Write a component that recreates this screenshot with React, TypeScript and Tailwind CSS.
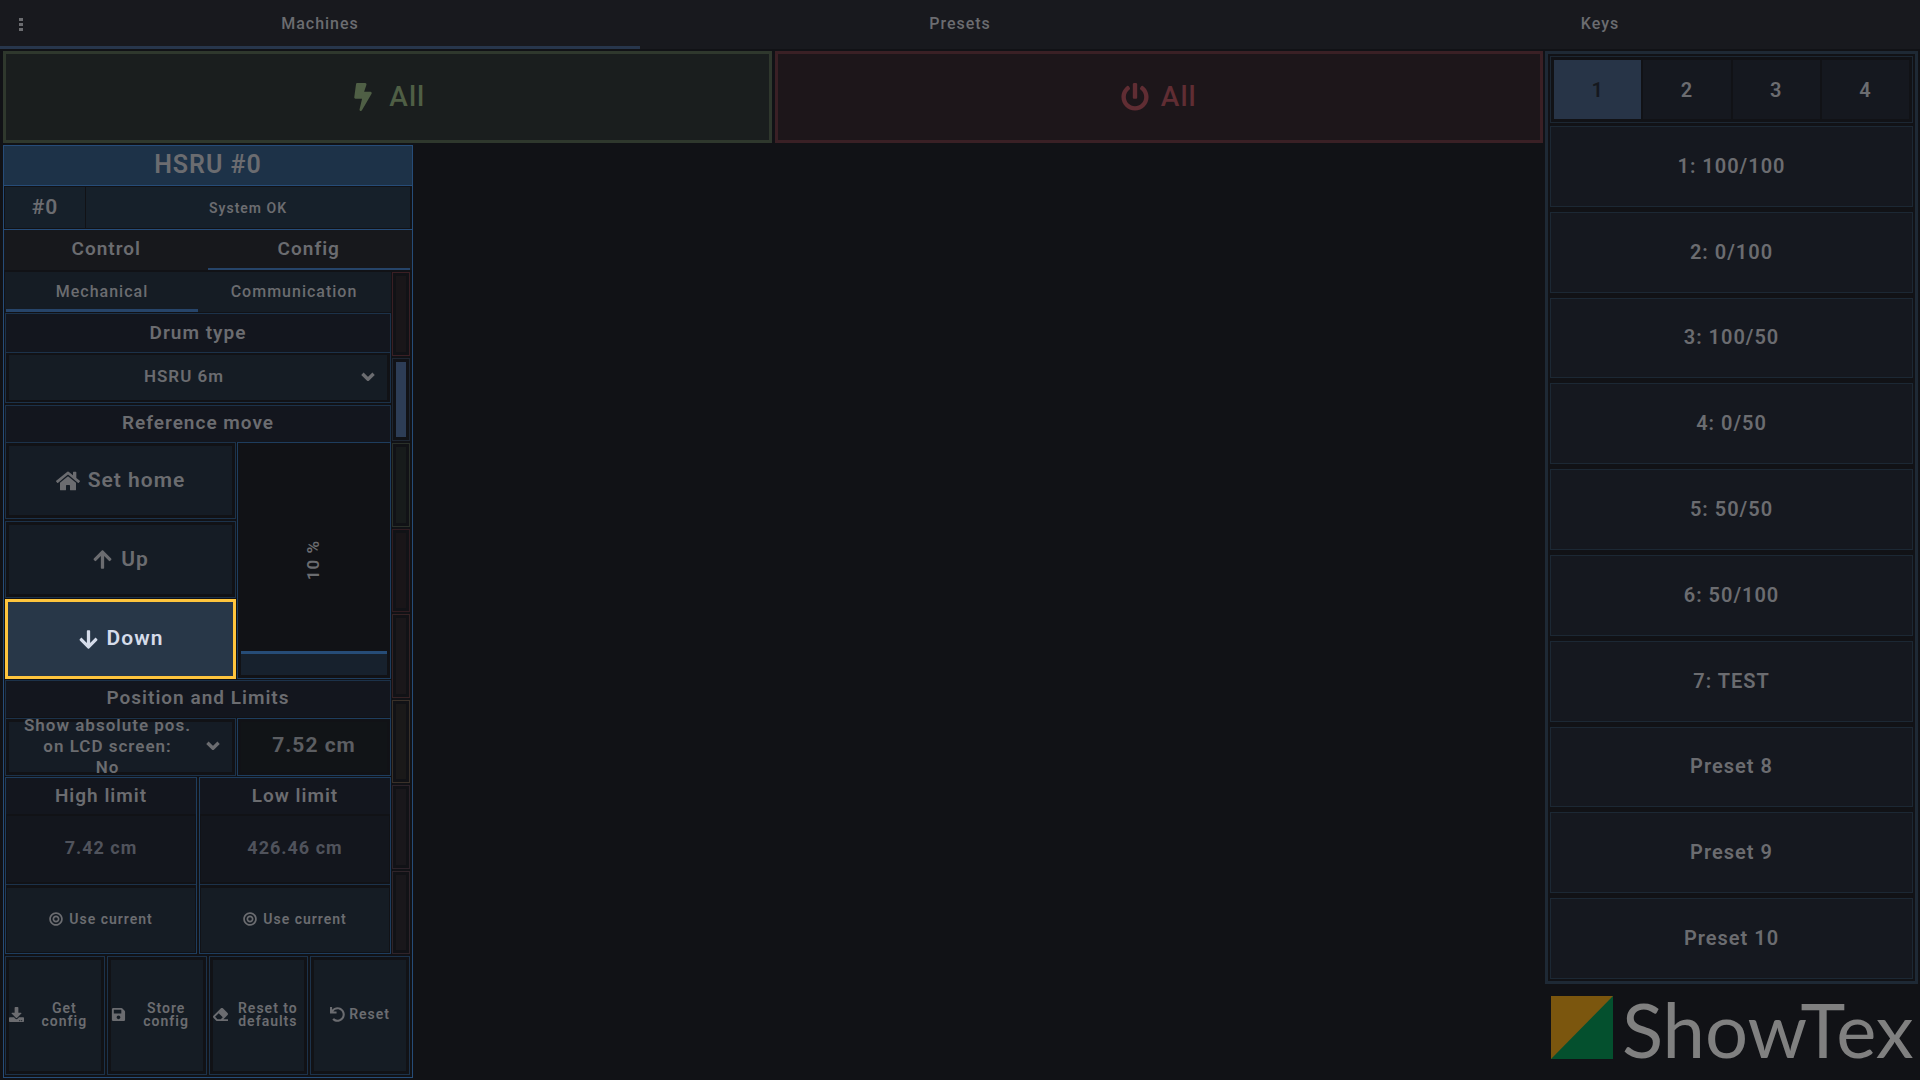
import { useState } from "react";
import {
  FaArrowDown,
  FaArrowUp,
  FaBolt,
  FaBullseye,
  FaDownload,
  FaEraser,
  FaHome,
  FaPowerOff,
  FaSave,
  FaUndo,
} from "react-icons/fa";

const TABS = ["Machines", "Presets", "Keys"];

const KEYS = [
  "1: 100/100",
  "2: 0/100",
  "3: 100/50",
  "4: 0/50",
  "5: 50/50",
  "6: 50/100",
  "7: TEST",
  "Preset 8",
  "Preset 9",
  "Preset 10",
];

const STRIP = [
  { name: "Disable", border: "border-[#3a1f24]", fill: "bg-[#191619]" },
  { name: "Config", border: "border-[#1e2632]", fill: "bg-[#2d3d56]" },
  { name: "Enable", border: "border-[#2a3029]", fill: "bg-[#171b1b]" },
  { name: "Stop", border: "border-[#301c21]", fill: "bg-[#191518]" },
  { name: "Errors", border: "border-[#352224]", fill: "bg-[#1a171a]" },
  { name: "Warnings", border: "border-[#3a3129]", fill: "bg-[#1a1919]" },
  { name: "Log", border: "border-[#2c2229]", fill: "bg-[#19171b]" },
  { name: "Service", border: "border-[#2f242a]", fill: "bg-[#19171b]" },
];

const ACTIONS = [
  { label: "Get config", Icon: FaDownload },
  { label: "Store config", Icon: FaSave },
  { label: "Reset to defaults", Icon: FaEraser },
  { label: "Reset", Icon: FaUndo },
];

function Chevron({ className }: { className?: string }) {
  return (
    <svg width="14" height="10" viewBox="0 0 14 10" fill="none" stroke="currentColor" strokeWidth="3.4" className={className}>
      <path d="M1.4 1.8 7 7.2l5.6-5.4" strokeLinejoin="round" />
    </svg>
  );
}

function Header() {
  return (
    <header className="relative bg-[#18191e]">
      <nav className="grid grid-cols-3">
        {TABS.map((t, i) => (
          <button
            key={t}
            className={`h-[49px] pt-[2px] border-b-3 text-base font-medium ${i === 0 ? "border-[#27364c]" : "border-transparent"}`}
          >
            {t}
          </button>
        ))}
      </nav>
      <button aria-label="Menu" className="absolute inset-y-0 left-0 w-[42px] flex items-center justify-center">
        <svg width="4" height="14" viewBox="0 0 4 14" fill="currentColor">
          <rect y="0" width="4" height="3" />
          <rect y="5" width="4" height="3" />
          <rect y="10" width="4" height="3" />
        </svg>
      </button>
    </header>
  );
}

function SectionTitle({ children }: { children: string }) {
  return <h3 className="h-9 flex items-center justify-center bg-[#13161e] pb-[2px] text-[19px]">{children}</h3>;
}

function MoveButton({ label, Icon, size }: { label: string; Icon: typeof FaHome; size: string }) {
  return (
    <div className="h-[77px] border border-[#1c324a] p-[3px]">
      <button className="w-full h-full flex items-center justify-center gap-2 bg-[#151c25] text-[21px]">
        <Icon className={size} /> {label}
      </button>
    </div>
  );
}

function Limit({ id, label, value }: { id: string; label: string; value: string }) {
  return (
    <div className="flex-1 min-w-0 border border-[#1e3d5e]">
      <label htmlFor={id} className="h-9 flex items-center justify-center bg-[#13161e] text-[19px]">
        {label}
      </label>
      <div className="h-[71px] border-b border-[#1c324a] px-px py-[2px]">
        <input
          id={id}
          defaultValue={value}
          className="w-full h-full bg-[#13161d] pb-[3px] text-center text-lg font-bold text-[#50535c]"
        />
      </div>
      <div className="h-[68px] px-px pt-[3px] pb-px">
        <button className="w-full h-full flex items-center justify-center gap-[6px] bg-[#151c24] pb-[2px] text-sm">
          <FaBullseye /> Use current
        </button>
      </div>
    </div>
  );
}

function Mechanical() {
  const [speed, setSpeed] = useState(10);

  return (
    <div className="flex-1 min-w-0">
      <div className="h-10 grid grid-cols-2 bg-[#151c24] px-px text-base font-medium">
        <button className="border-b-3 border-[#264469] pt-[2px]">Mechanical</button>
        <button className="border-b-3 border-transparent pt-[2px]">Communication</button>
      </div>

      {/* Drum type */}
      <section className="mt-px border border-[#1c324a]">
        <div className="bg-[#13161e] pt-[2px]">
          <SectionTitle>Drum type</SectionTitle>
        </div>
        <div className="relative h-[50px] border-t border-[#1c324a] px-[3px] py-[2px]">
          <select
            aria-label="Drum type"
            className="appearance-none w-full h-full bg-[#151c24] pr-7 pb-px text-center text-[17px]"
          >
            <option>HSRU 6m</option>
          </select>
          <Chevron className="pointer-events-none absolute right-[15px] top-[19px]" />
        </div>
      </section>

      {/* Reference move */}
      <section className="mt-[2px]">
        <div className="border-x border-t border-[#1c324a]">
          <SectionTitle>Reference move</SectionTitle>
        </div>
        <div className="flex gap-px">
          <div className="w-[231px]">
            <MoveButton label="Set home" Icon={FaHome} size="text-2xl" />
            <div className="pt-[2px]">
              <MoveButton label="Up" Icon={FaArrowUp} size="text-[21px]" />
            </div>
            <button className="mt-px w-full h-20 flex items-center justify-center gap-2 border-3 border-[#ffc53d] bg-[#283748] text-[21px] text-[#d5dcea]">
              <FaArrowDown /> Down
            </button>
          </div>
          <label className="relative flex-1 flex items-center justify-center border border-[#1e3d5e]">
            <span className="rotate-180 text-[17px] [writing-mode:vertical-rl]">{speed} %</span>
            <span
              className="absolute inset-x-[3px] bottom-[3px] border-t-3 border-[#264c77] bg-[#17212d]"
              style={{ height: `calc(${speed}% + 1px)` }}
            />
            <input
              type="range"
              aria-label="Speed"
              value={speed}
              onChange={(e) => setSpeed(Number(e.target.value))}
              className="absolute inset-0 w-full h-full opacity-0 [writing-mode:vertical-lr] [direction:rtl]"
            />
          </label>
        </div>
      </section>

      {/* Position and limits */}
      <section className="mt-px">
        <div className="border-x border-t border-[#1c324a] pb-px">
          <SectionTitle>Position and Limits</SectionTitle>
        </div>
        <div className="h-[58px] flex gap-px">
          <div className="w-[231px] border border-[#1c324a] p-[3px]">
            <div className="h-full flex items-center bg-[#151c25] pr-3 pb-[2px]">
              <div className="flex-1 flex flex-col items-center text-center text-[17px] leading-[21px]">
                <label htmlFor="abs-pos">
                  Show absolute pos.
                  <br />
                  on LCD screen:
                </label>
                <select id="abs-pos" className="appearance-none h-[21px] text-center">
                  <option>No</option>
                  <option>Yes</option>
                </select>
              </div>
              <Chevron className="shrink-0" />
            </div>
          </div>
          <div className="flex-1 border border-[#1e3d5e] p-[3px]">
            <output className="h-full flex items-center justify-center bg-[#111417] pb-[2px] text-[21px] font-bold text-[#5c5e62]">
              7.52 cm
            </output>
          </div>
        </div>
        <div className="mt-px flex gap-[2px]">
          <Limit id="high" label="High limit" value="7.42 cm" />
          <Limit id="low" label="Low limit" value="426.46 cm" />
        </div>
      </section>
    </div>
  );
}

function Machine() {
  return (
    <article className="w-[410px] flex flex-col border border-[#264c78] pb-[2px]">
      <h2 className="h-10 flex items-center justify-center border-b border-[#264c78] bg-[#1d3248] pb-px text-[25px]">
        HSRU #0
      </h2>
      <div className="h-[44px] flex gap-px border-b border-[#264c78] py-px pl-px pr-[2px]">
        <div className="w-20 flex items-center justify-center bg-[#16202a] text-[21px]">#0</div>
        <div className="flex-1 flex items-center justify-center bg-[#16202a] text-sm">System OK</div>
      </div>
      <div className="h-10 grid grid-cols-2 bg-[#17181c] pl-px pr-[2px] text-[19px]">
        <button className="border-b-2 border-transparent pt-px">Control</button>
        <button className="border-b-2 border-[#264469] pt-px">Config</button>
      </div>

      <div className="mt-[2px] flex gap-px pl-px pr-[2px]">
        <Mechanical />
        <div className="w-[18px] flex flex-col gap-[2px]">
          {STRIP.map((s) => (
            <button key={s.name} aria-label={s.name} className={`flex-1 flex border p-[3px] ${s.border}`}>
              <span className={`flex-1 self-stretch ${s.fill}`} />
            </button>
          ))}
        </div>
      </div>

      <div className="mt-[2px] min-h-[110px] flex-1 grid grid-cols-4 gap-[2px] pl-px pr-[2px]">
        {ACTIONS.map(({ label, Icon }) => (
          <div key={label} className="flex border border-[#1c324a] p-[3px]">
            <button className="flex-1 min-w-0 flex items-center justify-center gap-1 bg-[#151c24] pb-[2px] text-sm leading-[13px]">
              <Icon className="shrink-0 text-[15px]" />
              <span>{label}</span>
            </button>
          </div>
        ))}
      </div>
    </article>
  );
}

function KeysPanel() {
  const [page, setPage] = useState(1);

  return (
    <aside className="w-[373px] shrink-0 flex flex-col">
      <div className="flex-1 flex flex-col border-3 border-[#1e2935] p-[2px]">
        <div className="h-[67px] shrink-0 grid grid-cols-4 gap-[2px] border border-[#1c2733] p-[3px] text-xl">
          {[1, 2, 3, 4].map((n) => (
            <button
              key={n}
              onClick={() => setPage(n)}
              className={n === page ? "bg-[#273447] text-[#15181e]" : "bg-[#15181f]"}
            >
              {n}
            </button>
          ))}
        </div>
        <div className="mt-[3px] flex-1 flex flex-col gap-[5px]">
          {KEYS.map((k) => (
            <button key={k} className="flex-1 min-h-12 border border-[#1c2834] bg-[#15181f] pb-px text-xl">
              {k}
            </button>
          ))}
        </div>
      </div>
      <div className="h-24 flex items-start gap-[9px] pt-3 pl-[6px]">
        <svg width="62" height="63" viewBox="0 0 62 63" className="shrink-0">
          <rect width="62" height="63" fill="#7b560e" />
          <path d="M62 0V63H0Z" fill="#04502e" />
        </svg>
        <span className="font-['Lato',sans-serif] text-[76px] leading-[66px] font-normal tracking-normal text-[#808080]">
          ShowTex
        </span>
      </div>
    </aside>
  );
}

export default function App() {
  return (
    <div className="min-h-screen flex flex-col bg-[#111216] font-['Roboto',sans-serif] font-semibold tracking-[1px] text-[#6b6c70]">
      <Header />
      <div className="flex-1 flex gap-[2px] pt-[2px] pl-[3px] pr-[2px]">
        <main className="flex-1 min-w-0 flex flex-col pb-[2px]">
          <div className="h-[92px] shrink-0 grid grid-cols-2 gap-[3px] text-[28px] font-medium">
            <button className="flex items-center justify-center gap-3 border-3 border-[#2f382d] bg-[#1a1e1e] text-[#4f5f45]">
              <FaBolt /> All
            </button>
            <button className="flex items-center justify-center gap-3 border-3 border-[#3a2025] bg-[#1d161a] text-[#602d33]">
              <FaPowerOff /> All
            </button>
          </div>
          <div className="mt-[2px] flex-1 flex">
            <Machine />
          </div>
        </main>
        <KeysPanel />
      </div>
    </div>
  );
}
